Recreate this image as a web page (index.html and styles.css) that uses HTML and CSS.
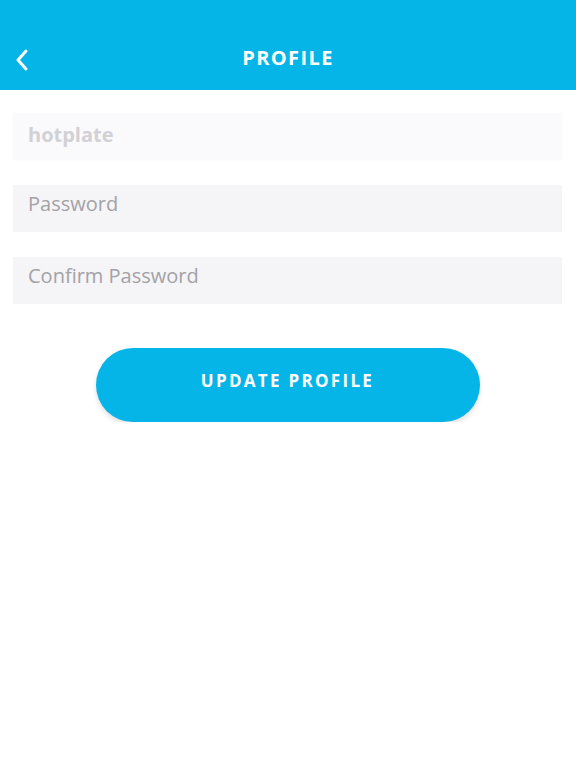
FILE: index.html
```html
<!DOCTYPE html>
<html lang="en">
<head>
    <meta charset="UTF-8">
    <meta name="viewport" content="width=device-width, initial-scale=1.0">
    <title>Profile</title>
    <link rel="stylesheet" href="styles.css">
</head>
<body>
    <div class="tete">
        <a class="retour" href="#">
            <svg width="16" height="24" viewBox="0 0 16 24">
                <path d="M12 3 L4 12 L12 21" fill="none" stroke="#fff" stroke-width="3" stroke-linecap="round" stroke-linejoin="round"/>
            </svg>
        </a>
        <h1>PROFILE</h1>
    </div>
    <form class="profil">
        <div class="champ champ-nom">hotplate</div>
        <div class="champ">Password</div>
        <div class="champ">Confirm Password</div>
        <button type="button">UPDATE PROFILE</button>
    </form>
</body>
</html>
```

FILE: styles.css
```css
body {
    font-family: "Open Sans", Arial, sans-serif;
    background-color: #fff;
    margin: 0;
    padding: 0;
}
.tete {
    background-color: #05b5e8;
    height: 90px;
    display: flex;
    justify-content: center;
    align-items: center;
    padding-top: 24px;
    box-sizing: border-box;
    position: relative;
}
.retour {
    position: absolute;
    left: 14px;
    top: 48px;
    display: flex;
}
.tete h1 {
    margin: 0;
    color: #fff;
    font-size: 20px;
    font-weight: 700;
    letter-spacing: 1.4px;
}
.profil {
    display: flex;
    flex-direction: column;
    align-items: center;
    padding: 23px 14px 0 13px;
}
.champ {
    align-self: stretch;
    height: 47px;
    box-sizing: border-box;
    background-color: #f5f4f6;
    color: #a3a2a6;
    font-size: 20px;
    line-height: 38px;
    padding-left: 15px;
    margin-bottom: 25px;
}
.champ-nom {
    background-color: #faf9fb;
    color: #d2d1d5;
    font-weight: 700;
    line-height: 44px;
    box-shadow: 0 0 4px #faf9fb;
}
button {
    margin-top: 19px;
    width: 384px;
    height: 74px;
    padding-bottom: 10px;
    border: none;
    border-radius: 37px;
    background-color: #05b5e8;
    color: #fff;
    font-family: "Open Sans", Arial, sans-serif;
    font-size: 17px;
    font-weight: 700;
    letter-spacing: 2.3px;
    box-shadow: 0 3px 5px rgba(0, 0, 0, 0.12);
    cursor: pointer;
}
```
